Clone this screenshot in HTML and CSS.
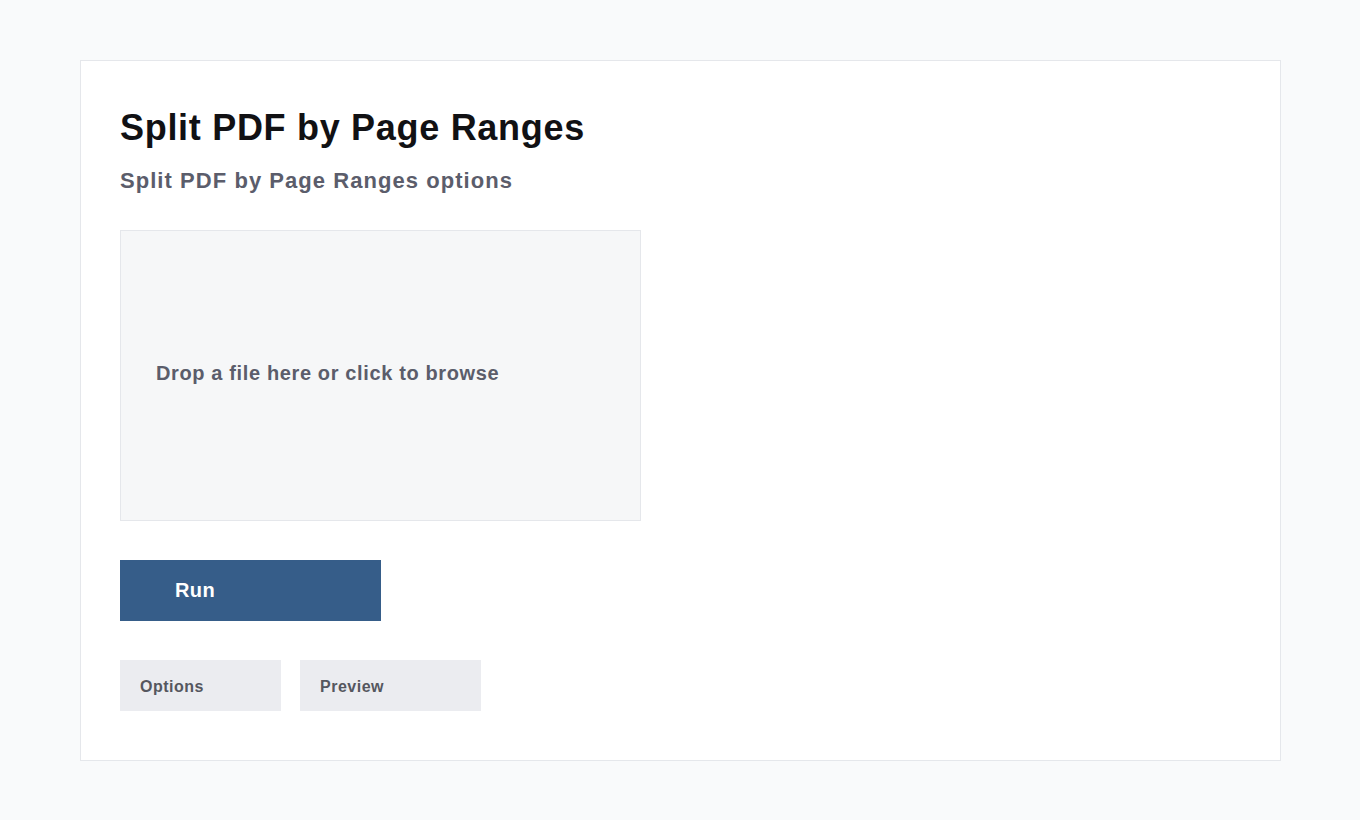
FILE: index.html
```html
<!DOCTYPE html>
<html lang="en">
<head>
<meta charset="utf-8">
<title>Split PDF by Page Ranges</title>
<link rel="stylesheet" href="styles.css">
</head>
<body>
<main class="card">
  <h1 class="title">Split PDF by Page Ranges</h1>
  <h2 class="subtitle">Split PDF by Page Ranges options</h2>
  <div class="dropzone">Drop a file here or click to browse</div>
  <button class="run">Run</button>
  <div class="tabs">
    <div class="tab tab-options">Options</div>
    <div class="tab tab-preview">Preview</div>
  </div>
</main>
</body>
</html>
```
FILE: styles.css
```css
html, body {
  margin: 0;
  padding: 0;
}
body {
  background: #f9fafb;
  font-family: "Liberation Sans", Arial, sans-serif;
  padding: 60px 80px;
}
.card {
  box-sizing: border-box;
  width: 1201px;
  height: 701px;
  background: #ffffff;
  border: 1px solid #e5e7eb;
  padding: 46px 39px 40px;
  display: flex;
  flex-direction: column;
  align-items: flex-start;
}
.title {
  margin: 0;
  font-size: 36px;
  font-weight: 700;
  color: #111114;
  line-height: 42px;
  letter-spacing: 0.7px;
}
.subtitle {
  margin: 19px 0 0;
  font-size: 22px;
  font-weight: 700;
  color: #5b5d6b;
  line-height: 25px;
  letter-spacing: 1.05px;
}
.dropzone {
  box-sizing: border-box;
  margin-top: 37px;
  width: 521px;
  height: 291px;
  background: #f6f7f8;
  border: 1px solid #e5e7eb;
  display: flex;
  align-items: center;
  padding: 0 0 4px 35px;
  font-size: 20px;
  font-weight: 700;
  color: #5b5d6b;
  letter-spacing: 0.63px;
}
.run {
  margin-top: 39px;
  width: 261px;
  height: 61px;
  border: 0;
  background: #365d89;
  color: #ffffff;
  font-family: inherit;
  font-size: 20px;
  font-weight: 700;
  letter-spacing: 0.4px;
  text-align: left;
  padding: 0 0 0 55px;
}
.tabs {
  margin-top: 39px;
  display: flex;
  gap: 19px;
}
.tab {
  box-sizing: border-box;
  height: 51px;
  background: #ebecf0;
  color: #55575f;
  font-size: 16px;
  font-weight: 700;
  letter-spacing: 0.5px;
  display: flex;
  align-items: center;
  padding: 2px 0 0 20px;
}
.tab-options { width: 161px; }
.tab-preview { width: 181px; }
```
